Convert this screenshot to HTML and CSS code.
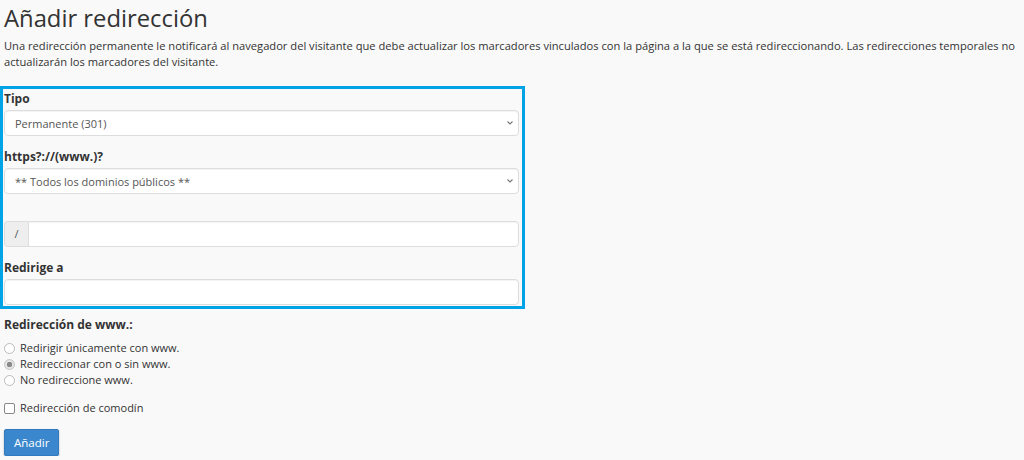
FILE: index.html
```html
<!DOCTYPE html>
<html lang="es">
<head>
    <meta charset="UTF-8">
    <title>Añadir redirección</title>
    <link rel="stylesheet" href="styles.css">
</head>
<body>
    <div class="page">
        <h1 class="page-title">Añadir redirección</h1>
        <p class="intro">Una redirección permanente le notificará al navegador del visitante que debe actualizar los marcadores vinculados con la página a la que se está redireccionando. Las redirecciones temporales no actualizarán los marcadores del visitante.</p>

        <div class="highlight-box">
            <div class="form-group">
                <label class="field-label">Tipo</label>
                <div class="select-wrap">
                    <select class="form-control">
                        <option>Permanente (301)</option>
                    </select>
                    <svg class="chevron" width="8" height="6" viewBox="0 0 8 6"><path d="M1.5 1.5 L4 4 L6.5 1.5" fill="none" stroke="#777" stroke-width="1.1"/></svg>
                </div>
            </div>
            <div class="form-group">
                <label class="field-label">https?://(www.)?</label>
                <div class="select-wrap">
                    <select class="form-control">
                        <option>** Todos los dominios públicos **</option>
                    </select>
                    <svg class="chevron" width="8" height="6" viewBox="0 0 8 6"><path d="M1.5 1.5 L4 4 L6.5 1.5" fill="none" stroke="#777" stroke-width="1.1"/></svg>
                </div>
            </div>
            <div class="form-group">
                <label class="field-label empty"></label>
                <div class="input-group">
                    <span class="addon">/</span>
                    <input type="text" class="form-control">
                </div>
            </div>
            <div class="form-group last">
                <label class="field-label">Redirige a</label>
                <input type="text" class="form-control">
            </div>
        </div>

        <div class="www-group">
            <div class="field-label">Redirección de www.:</div>
            <label class="radio"><input type="radio" name="www"> Redirigir únicamente con www.</label>
            <label class="radio"><input type="radio" name="www" checked> Redireccionar con o sin www.</label>
            <label class="radio"><input type="radio" name="www"> No redireccione www.</label>
        </div>

        <label class="checkbox"><input type="checkbox"> Redirección de comodín</label>

        <button class="btn-primary">Añadir</button>
    </div>
</body>
</html>
```

FILE: styles.css
```css
* {
    margin: 0;
    padding: 0;
    box-sizing: border-box;
}

body {
    font-family: "Open Sans", sans-serif;
    font-size: 11px;
    color: #333;
    background-color: #f9f9f9;
}

.page {
    padding: 0 4px;
}

.page-title {
    font-size: 23.8px;
    font-weight: 400;
    line-height: 36px;
    color: #333;
}

.intro {
    font-size: 11.15px;
    line-height: 16px;
    margin-top: 2px;
    margin-bottom: 16px;
}

.highlight-box {
    width: 525px;
    margin-left: -4px;
    border: 3px solid #00a3e6;
    padding: 0 3px 1px 1px;
}

.form-group {
    margin-bottom: 11px;
}

.form-group.last {
    margin-bottom: 0;
}

.field-label {
    display: block;
    font-size: 12px;
    font-weight: 700;
    line-height: 20px;
    padding-bottom: 1px;
}

.field-label.empty {
    height: 16px;
}

.form-control {
    display: block;
    width: 100%;
    height: 26px;
    padding: 0 10px;
    font-family: "Open Sans", sans-serif;
    font-size: 11px;
    color: #555;
    background: #fff;
    border: 1px solid #ddd;
    border-radius: 4px;
    box-shadow: inset 0 1px 1px rgba(0,0,0,0.05);
    -webkit-appearance: none;
    appearance: none;
    outline: none;
}

.select-wrap {
    position: relative;
}

.chevron {
    position: absolute;
    right: 5px;
    top: 10px;
}

.input-group {
    display: flex;
}

.input-group .addon {
    width: 24px;
    height: 26px;
    line-height: 24px;
    text-align: center;
    color: #555;
    background: #eee;
    border: 1px solid #ddd;
    border-right: none;
    border-radius: 4px 0 0 4px;
}

.input-group .form-control {
    flex: 1;
    border-radius: 0 4px 4px 0;
}

.www-group {
    margin-top: 6px;
}

.www-group .field-label {
    line-height: 20px;
    padding-bottom: 0;
    margin-bottom: 5px;
}

.radio,
.checkbox {
    display: flex;
    align-items: center;
    line-height: 16px;
    gap: 5px;
}

.radio input {
    -webkit-appearance: none;
    appearance: none;
    width: 11px;
    height: 11px;
    margin: 0;
    border: 1px solid #bbb;
    border-radius: 50%;
    background: #fff;
}

.radio input:checked {
    background: radial-gradient(circle, #8a8a8a 0 2.5px, #e6e6e6 3px);
    border-color: #c4c4c4;
}

.checkbox {
    margin-top: 12px;
}

.checkbox input {
    -webkit-appearance: none;
    appearance: none;
    width: 11px;
    height: 11px;
    margin: 0;
    border: 1px solid #888;
    border-radius: 2px;
    background: #fff;
}

.btn-primary {
    display: block;
    margin-top: 13px;
    height: 27px;
    padding: 0 9px;
    font-family: "Open Sans", sans-serif;
    font-size: 11.5px;
    color: #fff;
    background: #3a87cd;
    border: 1px solid #327bbf;
    border-radius: 2px;
    box-shadow: 0 1px 2px rgba(0,0,0,0.3);
}
```
